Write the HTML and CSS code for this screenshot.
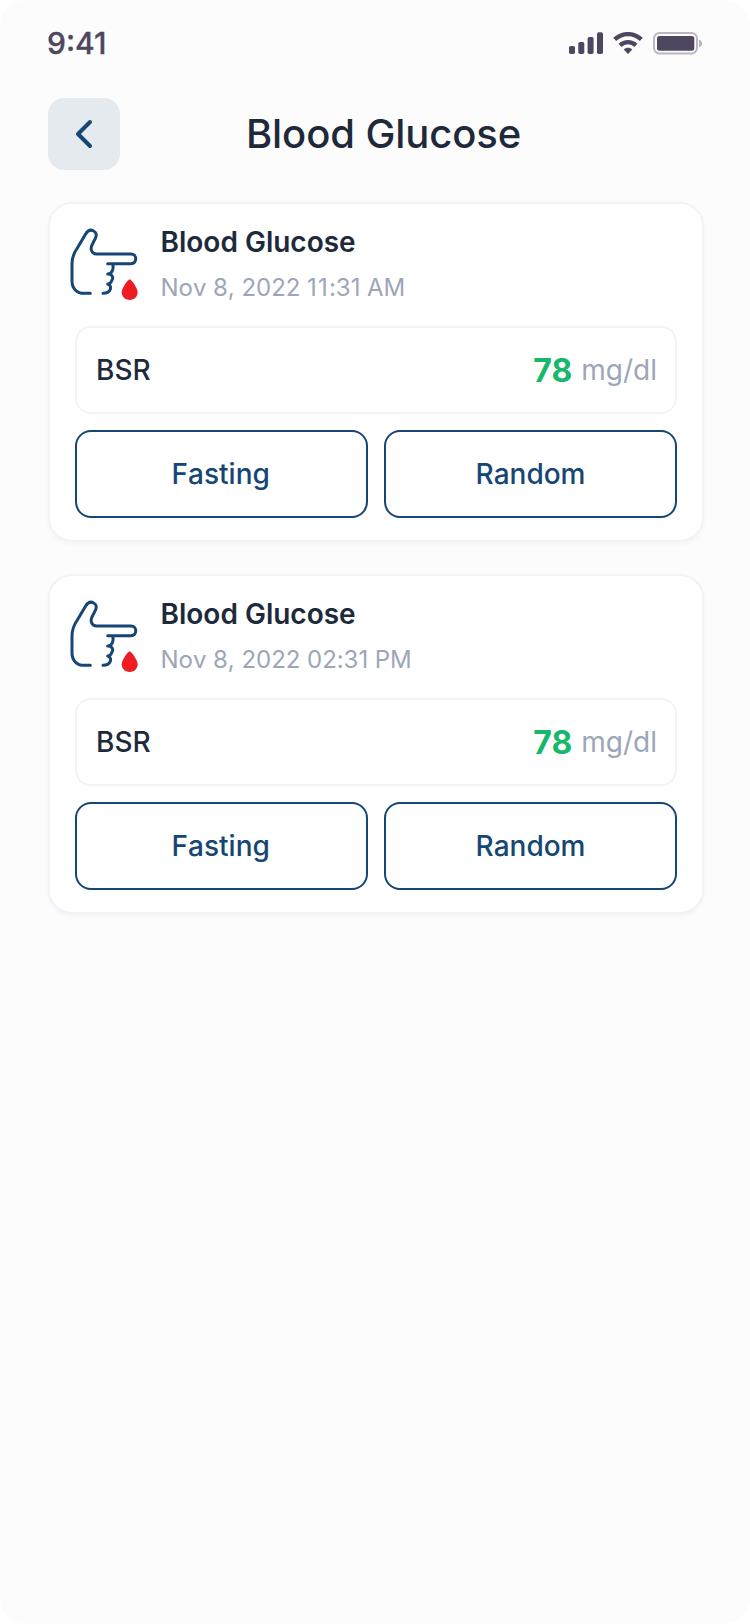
FILE: index.html
```html
<!DOCTYPE html>
<html lang="en">
<head>
<meta charset="utf-8">
<title>Blood Glucose</title>
<link rel="stylesheet" href="styles.css">
</head>
<body>
<svg class="sprite" aria-hidden="true">
  <symbol id="finger" viewBox="84 96 216 225">
    <path class="hand" d="M151 295H132C110 295 96 280 96 258V206C96 187 103 172 112 159L137 117C143 107 152 103 161 108C169 112 171 120 166 130L156 150C150 162 155 177 170 177H273C292 177 292 206 273 206H203M218 206C222 222 216 237 203 237C216 237 222 247 215 257C213 264 207 267 203 267C211 269 213 277 211 283C208 292 201 295 189 295"/>
    <path class="drop" d="M269 253C274 253 293 280 293 292C293 305 283 315 269 315C255 315 245 305 245 292C245 280 264 253 269 253Z"/>
  </symbol>
</svg>
<div class="screen">
  <div class="status">
    <span class="time">9:41</span>
    <svg class="indicators" viewBox="0 0 136 24" aria-hidden="true">
      <rect x="1" y="14" width="6" height="8" rx="1.8"/>
      <rect x="10.300" y="10" width="6" height="12" rx="1.8"/>
      <rect x="19.600" y="5" width="6" height="17" rx="1.8"/>
      <rect x="29" y="0.300" width="6" height="21.700" rx="1.8"/>
      <path class="arc" d="M46.700 7.400C54.500 .4 65.500 .4 73.300 7.400M52 13.300C56.800 9.100 63.200 9.100 68 13.300"/>
      <path d="M60 22L55.700 17.500C58.100 15.100 61.900 15.100 64.300 17.500Z"/>
      <rect class="shell" x="86" y="1" width="43" height="20.500" rx="5.500"/>
      <rect x="89" y="4" width="37.300" height="14.700" rx="2.500"/>
      <path class="cap" d="M131 7.500C135 9 135 14 131 15.500Z"/>
    </svg>
  </div>
  <header class="header">
    <button class="back" aria-label="Back"><svg viewBox="0 0 72 72"><path d="M42 24L30 36L42 48"/></svg></button>
    <h1 class="title">Blood Glucose</h1>
  </header>
  <main class="cards">
    <section class="card">
      <div class="card-head">
        <svg class="icon"><use href="#finger"/></svg>
        <div class="heading"><h2 class="name">Blood Glucose</h2><p class="date">Nov 8, 2022 <span class="hour">11</span>:31 AM</p></div>
      </div>
      <div class="reading"><span class="label">BSR</span><span class="value"><b class="number">78</b><span class="unit">mg/dl</span></span></div>
      <div class="options"><button class="option option-first">Fasting</button><button class="option">Random</button></div>
    </section>
    <section class="card">
      <div class="card-head">
        <svg class="icon"><use href="#finger"/></svg>
        <div class="heading"><h2 class="name">Blood Glucose</h2><p class="date">Nov 8, 2022 02:31 PM</p></div>
      </div>
      <div class="reading"><span class="label">BSR</span><span class="value"><b class="number">78</b><span class="unit">mg/dl</span></span></div>
      <div class="options"><button class="option option-first">Fasting</button><button class="option">Random</button></div>
    </section>
  </main>
</div>
</body>
</html>
```
FILE: styles.css
```css
* { box-sizing: border-box; margin: 0; padding: 0; }
body { background: #fff; font-family: Inter, sans-serif; color: #1e2a3b; }
button { font: inherit; background: none; border: 0; }
.sprite { display: none; }
.screen { width: 750px; height: 1624px; background: #fcfcfc; border-radius: 26px; overflow: hidden; }
.status { height: 98px; padding: 31px 46px 0 47px; display: flex; justify-content: space-between; color: #4f4760; }
.time { font-size: 30px; line-height: 24px; height: 24px; font-weight: 500; -webkit-text-stroke: .3px #4f4760; }
.indicators { width: 136px; height: 24px; margin-top: 1px; fill: #4f4760; }
.indicators .arc { fill: none; stroke: #4f4760; stroke-width: 4.4; }
.indicators .shell { fill: none; stroke: #4f4760; stroke-width: 2; opacity: .38; }
.indicators .cap { opacity: .4; }
.header { display: grid; grid-template-columns: 72px 1fr; height: 72px; padding: 0 54px 0 48px; }
.back { width: 72px; height: 72px; border-radius: 16px; background: #e4eaee; }
.back svg { display: block; width: 72px; height: 72px; fill: none; stroke: #164674; stroke-width: 4; stroke-linecap: round; stroke-linejoin: round; }
.title { font-size: 40px; font-weight: 500; line-height: 72px; text-align: center; padding-right: 49px; letter-spacing: -.1px; }
.cards { display: flex; flex-direction: column; gap: 32px; padding: 32px 46px 0 48px; }
.card { height: 340px; background: #fff; border: 2px solid #f2f3f8; border-radius: 24px; padding: 23px 25px 0; box-shadow: 0 2px 4px rgba(30, 42, 59, .035); }
.card-head { display: flex; height: 99px; margin-left: -7.300px; }
.icon { width: 72px; height: 75px; flex: none; }
.hand { fill: none; stroke: #164674; stroke-width: 9; stroke-linecap: round; stroke-linejoin: round; }
.drop { fill: #ed1c24; }
.heading { margin-left: 20.800px; }
.name { font-size: 28px; font-weight: 600; line-height: 32px; margin-top: -1px; }
.date { font-size: 24px; line-height: 30px; margin-top: 15px; color: #9ca6b9; font-kerning: none; letter-spacing: -.04px; }
.hour { letter-spacing: 1.200px; }
.reading { height: 88px; border: 2px solid #f2f3f8; border-radius: 16px; display: flex; justify-content: space-between; align-items: center; padding: 0 18px 0 19px; font-size: 28px; }
.label { font-weight: 500; }
.value { display: flex; align-items: center; gap: 9px; }
.number { font-size: 32px; font-weight: 700; color: #17b86c; }
.unit { color: #9ca6b9; }
.options { display: grid; grid-template-columns: 1fr 1fr; gap: 16px; margin-top: 16px; }
.option { height: 88px; border: 2px solid #164674; border-radius: 16px; font-size: 28px; font-weight: 500; color: #164674; font-kerning: none; }
.option-first { padding-right: 1.500px; }
```
